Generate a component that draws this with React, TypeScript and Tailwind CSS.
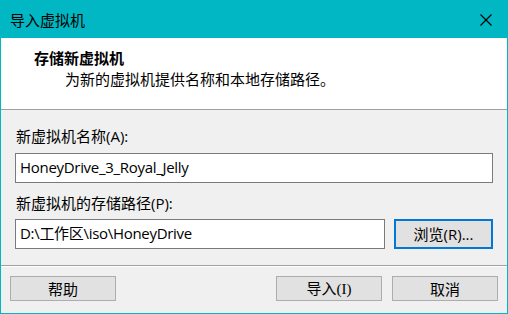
export default function App() {
  return (
    <div className="w-[508px] h-[314px] bg-[#00b7c3] flex flex-col px-px pb-px text-[15px] text-black font-['Open_Sans','Noto_Sans_CJK_SC',sans-serif]">
      {/* title bar */}
      <div className="h-[38px] shrink-0 flex items-center justify-between pl-[9px] pr-[15px]">
        <span className="leading-[20px] pt-px">导入虚拟机</span>
        <svg width="12" height="12" viewBox="0 0 12 12" className="mt-px">
          <path d="M0.5 0.5 L11.5 11.5 M11.5 0.5 L0.5 11.5" stroke="#000" strokeWidth="1.1" fill="none" />
        </svg>
      </div>

      {/* header */}
      <div className="h-[72px] shrink-0 bg-white border-b border-[#a0a0a0] pt-[10px]">
        <div className="pl-[33px] font-bold leading-[20px]">存储新虚拟机</div>
        <div className="pl-[64px] leading-[20px] mt-px">为新的虚拟机提供名称和本地存储路径。</div>
      </div>

      {/* body */}
      <div className="flex-1 bg-[#f0f0f0] flex flex-col">
        <div className="px-[14px] pt-[16px] flex flex-col">
          <label className="leading-[20px] pl-px">新虚拟机名称(A):</label>
          <div className="mt-[7px] h-[30px] bg-white border border-[#7a7a7a] pl-[4px] leading-[20px] pt-[3px] tracking-[-0.3px]">
            HoneyDrive_3_Royal_Jelly
          </div>
          <label className="mt-[10px] leading-[20px] pl-px">新虚拟机的存储路径(P):</label>
          <div className="mt-[6px] flex gap-[9px]">
            <div className="flex-1 h-[30px] bg-white border border-[#7a7a7a] pl-[4px] leading-[20px] pt-[3px] tracking-[-0.3px]">
              D:\工作区\iso\HoneyDrive
            </div>
            <button className="w-[99px] h-[30px] bg-[#e1e1e1] border-2 border-[#0078d7] leading-[20px]">
              浏览(R)...
            </button>
          </div>
        </div>

        <div className="mt-[16px] border-t border-[#a0a0a0] border-b border-b-white" />

        <div className="flex items-center justify-between px-[9px] mt-[9px]">
          <button className="w-[106px] h-[25px] bg-[#e1e1e1] border border-[#adadad] leading-[20px]">帮助</button>
          <div className="flex gap-[10px]">
            <button className="w-[106px] h-[25px] bg-[#e1e1e1] border border-[#adadad] leading-[20px]">
              导入<span className="font-['Liberation_Serif',serif]">(I)</span>
            </button>
            <button className="w-[106px] h-[25px] bg-[#e1e1e1] border border-[#adadad] leading-[20px]">取消</button>
          </div>
        </div>
      </div>
    </div>
  );
}
